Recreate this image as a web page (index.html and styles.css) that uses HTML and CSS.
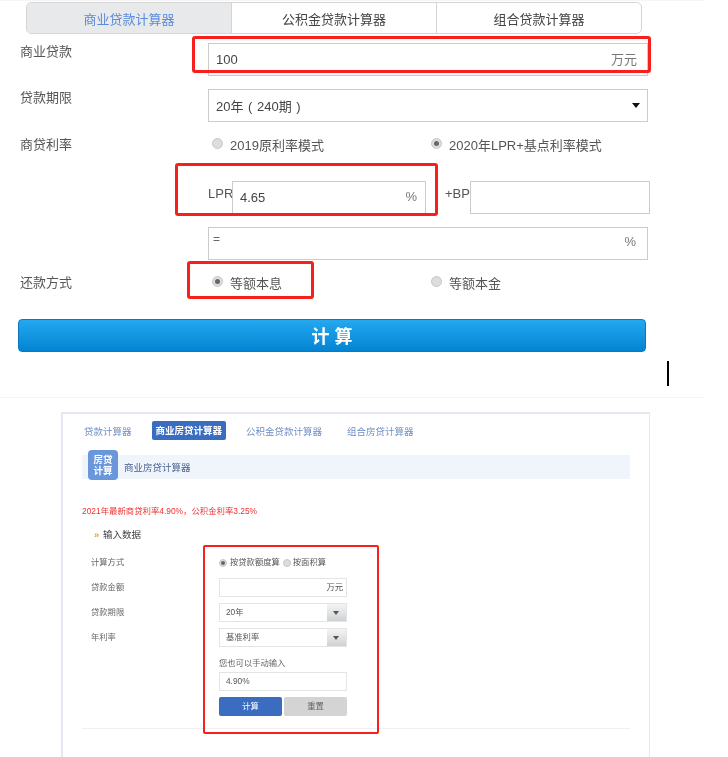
FILE: index.html
```html
<!DOCTYPE html>
<html lang="zh-CN">
<head>
  <meta charset="UTF-8" />
  <title>商业贷款计算器</title>
  <meta name="viewport" content="width=device-width, initial-scale=1" />
  <link rel="stylesheet" href="styles.css">
</head>
<body>
  <div class="page">
    <div class="top">
      <div class="tabs">
        <div class="tab active">商业贷款计算器</div>
        <div class="tab">公积金贷款计算器</div>
        <div class="tab">组合贷款计算器</div>
      </div>

      <div class="row row-amount">
        <div class="label">商业贷款</div>
        <div class="field field-wide"><span class="value">100</span><span class="unit">万元</span></div>
      </div>
      <div class="row row-term">
        <div class="label">贷款期限</div>
        <div class="field field-wide"><span class="value">20年 ( 240期 )</span><span class="arrow"></span></div>
      </div>
      <div class="row row-mode">
        <div class="label">商贷利率</div>
        <div class="radio-col"><span class="radio"></span>2019原利率模式</div>
        <div class="radio-col"><span class="radio checked"></span>2020年LPR+基点利率模式</div>
      </div>
      <div class="row row-lpr">
        <div class="lpr-label">LPR</div>
        <div class="field field-lpr"><span class="value">4.65</span><span class="unit">%</span></div>
        <div class="bp-label">+BP</div>
        <div class="field field-bp"></div>
      </div>
      <div class="row row-sum">
        <div class="field field-wide field-top"><span class="eq">=</span><span class="unit">%</span></div>
      </div>
      <div class="row row-repay">
        <div class="label">还款方式</div>
        <div class="radio-col"><span class="radio checked"></span>等额本息</div>
        <div class="radio-col"><span class="radio"></span>等额本金</div>
      </div>
      <button class="calc-button">计 算</button>
      <div class="caret"></div>
    </div>

    <div class="card">
      <div class="card-nav">
        <span class="nav-item">贷款计算器</span>
        <span class="nav-item current">商业房贷计算器</span>
        <span class="nav-item">公积金贷款计算器</span>
        <span class="nav-item nav-last">组合房贷计算器</span>
      </div>
      <div class="band">
        <div class="band-icon">房贷<br>计算</div>
        <div class="band-title">商业房贷计算器</div>
      </div>
      <p class="notice">2021年最新商贷利率4.90%，公积金利率3.25%</p>
      <div class="section-title"><span class="chevron">»</span>输入数据</div>

      <div class="calc">
        <div class="calc-labels">
          <div>计算方式</div>
          <div>贷款金额</div>
          <div>贷款期限</div>
          <div>年利率</div>
        </div>
        <div class="calc-controls">
          <div class="mini-radios"><span class="radio small checked"></span>按贷款额度算<span class="radio small second"></span>按面积算</div>
          <div class="box box-right">万元</div>
          <div class="box">20年<span class="drop"></span></div>
          <div class="box">基准利率<span class="drop"></span></div>
          <div class="hint">您也可以手动输入</div>
          <div class="box">4.90%</div>
          <div class="mini-buttons">
            <div class="mini-btn primary">计算</div>
            <div class="mini-btn">重置</div>
          </div>
        </div>
      </div>
      <div class="card-line"></div>
    </div>

    <!-- 红色标注框 -->
    <div class="mark mark-amount"></div>
    <div class="mark mark-lpr"></div>
    <div class="mark mark-repay"></div>
    <div class="mark mark-form"></div>
  </div>
</body>
</html>
```

FILE: styles.css
```css
* {
  box-sizing: border-box;
}
body {
  margin: 0;
  background: white;
  font-family: "Liberation Sans", "Noto Sans CJK SC", sans-serif;
  color: #555;
}
.page {
  position: relative;
  width: 728px;
  height: 757px;
  overflow: hidden;
}

/* top calculator */
.top {
  position: relative;
  width: 704px;
  height: 398px;
  padding-top: 1px;
  border-top: 1px solid #f5f5f5;
  border-bottom: 1px solid #f3f3f3;
  filter: blur(0.3px);
}
.tabs {
  display: flex;
  width: 616px;
  height: 32px;
  margin-left: 26px;
  border: 1px solid #d5d5d5;
  border-radius: 5px;
  overflow: hidden;
}
.tab {
  flex: 1;
  display: flex;
  align-items: center;
  justify-content: center;
  font-size: 13px;
  color: #444;
  border-left: 1px solid #d5d5d5;
}
.tab.active {
  background: #e8e9eb;
  color: #5b8bdc;
  border-left: none;
}
.row {
  display: flex;
  align-items: center;
  height: 33px;
  padding-left: 20px;
}
.row-amount {
  margin-top: 9px;
}
.row-amount .label {
  margin-top: -19px;
}
.row-term {
  margin-top: 13px;
}
.row-term .label {
  margin-top: -19px;
}
.row-mode {
  height: 44px;
}
.row-mode .label,
.row-repay .label {
  margin-top: -2px;
}
.row-lpr {
  margin-top: 15px;
}
.row-sum {
  margin-top: 13px;
  padding-left: 208px;
}
.row-repay {
  height: 45px;
}
.label {
  width: 188px;
  font-size: 13px;
  color: #555;
}
.field {
  display: flex;
  align-items: center;
  justify-content: space-between;
  height: 33px;
  padding: 0 10px 0 7px;
  border: 1px solid #ccc;
  font-size: 13px;
  background: white;
}
.field-wide {
  width: 440px;
}
.field-top {
  align-items: flex-start;
  padding-top: 4px;
}
.field-lpr {
  width: 194px;
  padding-right: 8px;
}
.field-bp {
  width: 180px;
}
.value {
  font-size: 13px;
  color: #444;
}
.row-term .value {
  word-spacing: 1px;
}
.unit {
  color: #777;
  font-size: 13px;
  margin-bottom: 2px;
}
.eq {
  font-size: 12px;
  color: #666;
  margin-left: -3px;
}
.row-sum .unit {
  margin: 2px 1px 0 0;
}
.arrow {
  width: 0;
  height: 0;
  margin-right: -3px;
  border-left: 4px solid transparent;
  border-right: 4px solid transparent;
  border-top: 5px solid #111;
}
.lpr-label {
  width: 24px;
  margin-left: 188px;
  margin-top: -8px;
  font-size: 13px;
  color: #555;
  white-space: nowrap;
}
.bp-label {
  width: 44px;
  padding-left: 19px;
  margin-top: -8px;
  font-size: 13px;
  color: #555;
}
.radio-col {
  display: flex;
  align-items: center;
  width: 219px;
  padding-left: 4px;
  font-size: 13px;
  color: #555;
}
.radio {
  position: relative;
  flex: none;
  width: 11px;
  height: 11px;
  margin-right: 7px;
  margin-top: -2px;
  border-radius: 50%;
  background: #ddd;
  border: 1px solid #c6c6c6;
}
.radio.checked::after {
  content: "";
  position: absolute;
  left: 2px;
  top: 2px;
  width: 5px;
  height: 5px;
  border-radius: 50%;
  background: #666;
}
.calc-button {
  display: block;
  width: 628px;
  height: 33px;
  margin: 14px 0 0 18px;
  padding: 0 0 2px;
  border: 1px solid #0b78c0;
  border-radius: 4px;
  background: linear-gradient(#24a8f0, #0384d2);
  color: white;
  font-family: inherit;
  font-size: 18px;
  font-weight: bold;
}
.caret {
  position: absolute;
  left: 667px;
  top: 360px;
  width: 2px;
  height: 25px;
  background: black;
}

/* lower card */
.card {
  position: absolute;
  left: 61px;
  top: 412px;
  width: 589px;
  height: 360px;
  padding: 7px 19px 0;
  border: 1px solid #e4e9f1;
  border-top-width: 2px;
  border-left-width: 2px;
  font-size: 9.5px;
  filter: blur(0.35px);
}
.card-nav {
  display: flex;
  align-items: center;
  gap: 20px;
  height: 19px;
  padding-left: 2px;
}
.nav-item {
  color: #6f8fc6;
}
.nav-last {
  margin-left: 5px;
}
.nav-item.current {
  padding: 0 4px;
  height: 19px;
  line-height: 19px;
  background: #3a6cc0;
  border-radius: 2px;
  color: white;
  font-weight: bold;
}
.band {
  display: flex;
  align-items: center;
  height: 24px;
  margin-top: 15px;
  padding-left: 6px;
  background: #f0f5fc;
}
.band-icon {
  width: 30px;
  height: 30px;
  margin-top: -5px;
  padding-top: 4px;
  background: #6a96dc;
  border-radius: 4px;
  color: white;
  text-align: center;
  line-height: 11px;
  font-size: 9.5px;
  font-weight: bold;
}
.band-title {
  margin-left: 6px;
  color: #4a6090;
}
.notice {
  margin: 27px 0 0;
  color: #f03030;
  font-size: 8.4px;
  line-height: 11px;
}
.section-title {
  margin: 12px 0 0 12px;
  color: #444;
  line-height: 12px;
}
.chevron {
  display: inline-block;
  width: 9px;
  color: #f0a020;
  font-weight: bold;
}
.calc {
  display: flex;
  margin-top: 16px;
}
.calc-labels {
  width: 137px;
  padding-left: 9px;
  color: #666;
  font-size: 8.3px;
}
.calc-labels div {
  height: 25px;
  line-height: 11px;
}
.calc-controls {
  width: 128px;
  color: #555;
  font-size: 8.3px;
}
.mini-radios {
  display: flex;
  align-items: center;
  height: 11px;
  margin-bottom: 10px;
  line-height: 9px;
  white-space: nowrap;
}
.radio.small {
  width: 8px;
  height: 8px;
  margin: 0 3px 0 0;
}
.radio.small.second {
  margin-left: 3px;
  margin-right: 2px;
}
.radio.small.checked::after {
  left: 1px;
  top: 1px;
  width: 4px;
  height: 4px;
}
.box {
  position: relative;
  height: 19px;
  margin-bottom: 6px;
  padding-left: 6px;
  line-height: 17px;
  border: 1px solid #e4e4e4;
  color: #555;
}
.box-right {
  padding-right: 3px;
  text-align: right;
}
.drop {
  position: absolute;
  top: 0;
  right: 0;
  bottom: 0;
  width: 19px;
  background: linear-gradient(#f4f4f4, #cfd2d4);
}
.drop::after {
  content: "";
  position: absolute;
  left: 6px;
  top: 7px;
  border-left: 3px solid transparent;
  border-right: 3px solid transparent;
  border-top: 4px solid #555;
}
.hint {
  height: 11px;
  margin: 11px 0 3px;
  line-height: 11px;
  color: #666;
}
.mini-buttons {
  display: flex;
  gap: 2px;
}
.mini-btn {
  flex: 1;
  height: 19px;
  line-height: 19px;
  text-align: center;
  background: #d4d4d4;
  border-radius: 2px;
  color: #666;
}
.mini-btn.primary {
  background: #3a6cc0;
  color: white;
}
.card-line {
  height: 1px;
  margin-top: 12px;
  background: #f0f0f0;
}

/* red annotation boxes */
.mark {
  position: absolute;
  border: 3px solid #f8201c;
  border-radius: 3px;
}
.mark-amount {
  left: 192px;
  top: 36px;
  width: 459px;
  height: 37px;
}
.mark-lpr {
  left: 175px;
  top: 163px;
  width: 263px;
  height: 53px;
}
.mark-repay {
  left: 187px;
  top: 261px;
  width: 127px;
  height: 38px;
}
.mark-form {
  left: 203px;
  top: 545px;
  width: 176px;
  height: 189px;
  border-width: 2px;
  border-radius: 2px;
}
```
